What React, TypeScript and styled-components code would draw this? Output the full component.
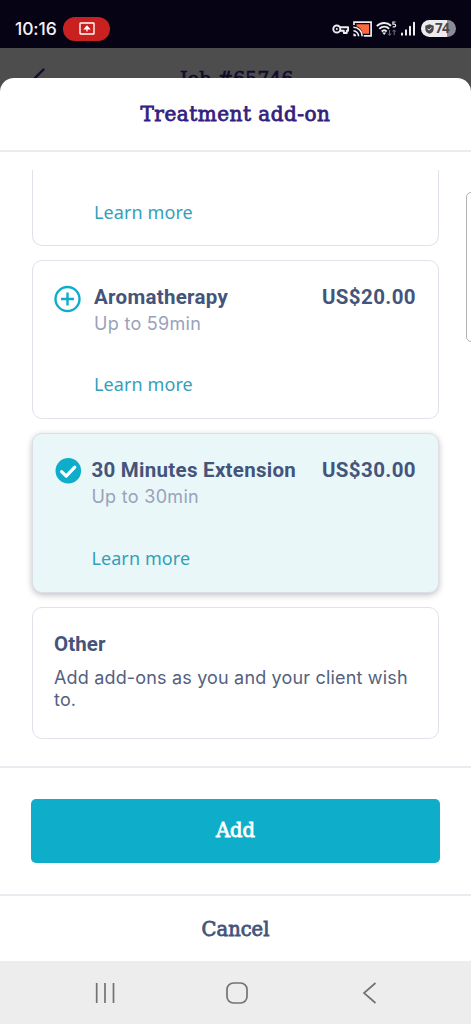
import React from "react";
import styled, { createGlobalStyle } from "styled-components";

const slab = `"DejaVu Serif", serif`;
const sans = `Roboto, "Liberation Sans", sans-serif`;
const body = `Inter, Roboto, sans-serif`;
const ink = "#44547a";

const GlobalStyle = createGlobalStyle`
  * { box-sizing: border-box; }
  body { margin: 0; background: #fff; }
  button { border: 0; padding: 0; background: none; font: inherit; }
`;

const Screen = styled.div`
  width: 471px;
  height: 1024px;
  display: flex;
  flex-direction: column;
  overflow: hidden;
  position: relative;
  background: #4d4d4d;
  font-family: ${sans};
`;

const StatusBar = styled.header`
  height: 48px;
  flex: none;
  display: flex;
  align-items: center;
  padding: 9px 15px 0 15px;
  background: #060314;
  color: #f3f3f5;
`;

const Clock = styled.span`
  width: 48px;
  font: 500 17.5px/20px Inter, sans-serif;
  letter-spacing: -0.1px;
  white-space: nowrap;
`;

const CastPill = styled.span`
  width: 47px;
  height: 24px;
  border-radius: 12px;
  background: #c8211f;
  display: flex;
  align-items: center;
  justify-content: center;
`;

const StatusIcons = styled.div`
  display: flex;
  align-items: center;
  margin-left: auto;
`;

const Battery = styled.span`
  width: 35px;
  height: 17px;
  margin-left: 5px;
  border-radius: 9px;
  display: flex;
  align-items: center;
  padding-left: 4px;
  gap: 1px;
  background: linear-gradient(90deg, #ececee 0 26px, #8d8c94 26px);
  color: #49484f;
  font: 700 13.5px/17px "Open Sans", sans-serif;
  letter-spacing: -0.8px;
`;

const DimmedHeader = styled.div`
  height: 30px;
  flex: none;
  display: flex;
  padding: 17px 0 0 30px;
  color: #120a30;
`;

const BackIcon = styled.svg`
  flex: none;
`;

const JobTitle = styled.span`
  margin: 1px 0 0 135px;
  font: 400 18.5px/26px ${slab};
  -webkit-text-stroke: 0.7px currentColor;
  letter-spacing: 0.3px;
  white-space: nowrap;
`;

const Sheet = styled.section`
  height: 883px;
  flex: none;
  border-radius: 14px 14px 0 0;
  background: #fff;
  display: flex;
  flex-direction: column;
  position: relative;
`;

const SheetTitle = styled.h1`
  margin: 0;
  height: 74px;
  flex: none;
  border-bottom: 2px solid #eaeaf0;
  text-align: center;
  color: #34207e;
  font: 400 20px/73px ${slab};
  letter-spacing: 0.5px;
  -webkit-text-stroke: 0.8px currentColor;
`;

const ScrollArea = styled.div`
  height: 596px;
  margin-top: 18px;
  flex: none;
  padding: 0 32px;
  overflow: hidden;
  display: flex;
  flex-direction: column;
  gap: 14px;
`;

const Card = styled.article<{ $height: number; $selected?: boolean; $cut?: boolean }>`
  width: 406.5px;
  height: ${(p) => p.$height}px;
  flex: none;
  border: 1.5px solid #e1e1ea;
  border-radius: 10px;
  padding: ${(p) => (p.$cut ? "0" : "22px")} 21.5px 0 21px;
  display: flex;
  gap: ${(p) => (p.$selected ? 9.4 : 12)}px;
  ${(p) => p.$cut && "border-top: 0; border-radius: 0 0 10px 10px;"}
  ${(p) =>
    p.$selected &&
    "background: #e9f7f9; border-color: #dadfe8; box-shadow: 0 2px 6px rgba(0,0,0,.25);"}
`;

const Mark = styled.span`
  width: 28px;
  height: 28px;
  margin-top: 1.5px;
`;

const Details = styled.div`
  flex: 1;
  display: flex;
  flex-direction: column;
`;

const Row = styled.div`
  display: flex;
  justify-content: space-between;
`;

const Name = styled.h2<{ $spacing?: number }>`
  margin: 0;
  color: ${ink};
  font: 700 20.5px/28px ${sans};
  letter-spacing: ${(p) => p.$spacing ?? 0.28}px;
  white-space: nowrap;
`;

const Duration = styled.p`
  margin: 0 0 -1px;
  color: #99a2b9;
  font: 400 18px/26px ${body};
  letter-spacing: 0.3px;
`;

const LearnMore = styled.a<{ $top: number }>`
  margin-top: ${(p) => p.$top}px;
  color: #349fba;
  font: 400 18px/26px "Noto Sans", sans-serif;
  letter-spacing: 0.1px;
`;

const Note = styled.p`
  margin: 9px -8px 0 0;
  color: #53617f;
  font: 400 18px/22px ${body};
  letter-spacing: 0.17px;
`;

const AddArea = styled.div`
  height: 130px;
  flex: none;
  border: solid #eaeaf0;
  border-width: 2px 0;
  padding: 31px 31px 0;
`;

const AddButton = styled.button`
  display: block;
  width: 409px;
  height: 63.5px;
  border-radius: 5px;
  background: #0eaecb;
  color: #fff;
  font: 400 19.5px/62px ${slab};
  padding-top: 0.5px;
  -webkit-text-stroke: 0.8px currentColor;
`;

const CancelButton = styled.button`
  height: 65px;
  color: ${ink};
  font: 400 19.5px/63px ${slab};
  padding-top: 2px;
  -webkit-text-stroke: 0.8px currentColor;
`;

const NavBar = styled.nav`
  height: 63px;
  flex: none;
  background: #ededed;
  display: flex;
  align-items: center;
  padding-left: 94px;
`;

const EdgeHandle = styled.div`
  position: absolute;
  top: 191.5px;
  right: -10px;
  width: 15.5px;
  height: 150px;
  border: 1.5px solid #b4b4b8;
  border-radius: 5px;
`;

const PlusMark = () => (
  <Mark>
    <svg width="28" height="28" viewBox="0 0 28 28" fill="none" stroke="#0eaecb" strokeWidth="2.4">
      <circle cx="13.5" cy="14" r="12" />
      <path d="M13.5 7.5v13M7 14h13" />
    </svg>
  </Mark>
);

const CheckMark = () => (
  <Mark>
    <svg width="28" height="28" viewBox="0 0 28 28" fill="none">
      <circle cx="14.3" cy="12.8" r="12.8" fill="#0eaecb" />
      <path d="M7.6 13.6l4.6 4.5 8.6-9" stroke="#fff" strokeWidth="3.2" strokeLinecap="round" strokeLinejoin="round" />
    </svg>
  </Mark>
);

const Signals = () => (
  <svg width="84" height="20" viewBox="0 0 84 20" fill="none" stroke="#ededf0">
    <g strokeWidth="1.9">
      <circle cx="4.8" cy="10" r="3.5" />
      <path d="M8 8.3h8.1v3.4h-1.3v2.3h-3v-2.3H8" strokeLinejoin="round" />
    </g>
    <circle cx="4.8" cy="10" r="1" fill="#ededf0" stroke="none" />
    <path d="M24.5 5.3H37v9.5h-6.3c-.6-4-3-6.6-6.2-7.5z" fill="#ff693d" stroke="none" />
    <path d="M22 6V3.2h17.1v13.6h-7.3" strokeWidth="1.7" />
    <g strokeWidth="1.6">
      <path d="M21.4 8.2a8.8 8.8 0 0 1 8.8 9M21.4 11.8a5.4 5.4 0 0 1 5.2 5.4" />
    </g>
    <path d="M21.4 14.5v2.7h2.8a2.8 2.8 0 0 0-2.8-2.7z" fill="#ededf0" stroke="none" />
    <g strokeWidth="1.9">
      <path d="M44.8 7.1c4-4 10.2-4.1 14.2-.4M47.3 9.9c3-2.8 7-2.8 9.8-.1M49.7 12.5c1.5-1.5 3.5-1.5 5 0" />
    </g>
    <path d="M50.2 13.6h4L52.2 16z" fill="#ededf0" stroke="none" />
    <path d="M57.6 11v5.2M56 14.6l1.6 1.7 1.5-1.7M62.2 16.2V11M60.7 12.6l1.5-1.7 1.5 1.7" stroke="#77757f" strokeWidth="1" />
    <path d="M63.5 3h-2.6v2.2h1.4c1.8 0 1.8 2.7 0 2.7h-1.6" strokeWidth="1.2" />
    <g strokeWidth="2" strokeLinecap="round">
      <path d="M70 14.5v1.3M74 11.3v4.5M78 7.8v8M82 3.8v12" />
    </g>
  </svg>
);

export default function App() {
  return (
    <Screen>
      <GlobalStyle />
      <StatusBar>
        <Clock>10:16</Clock>
        <CastPill>
          <svg width="16" height="13" viewBox="0 0 16 13" fill="none" stroke="#fff">
            <rect x="1" y="1" width="14" height="11" rx=".6" strokeWidth="1.4" />
            <path d="M8 9.6V5M5.6 6.8L8 4.2l2.4 2.6z" strokeWidth="1.2" fill="#fff" />
          </svg>
        </CastPill>
        <StatusIcons>
          <Signals />
          <Battery>
            <svg width="9" height="10" viewBox="0 0 9 10">
              <path d="M4.5.2L8.7 1.7v3.2c0 2.3-1.6 3.9-4.2 4.9C1.9 8.8.3 7.2.3 4.9V1.7z" fill="#49484f" />
              <path d="M2.5 4.7l1.5 1.5 2.6-2.7" fill="none" stroke="#ececee" />
            </svg>
            74
          </Battery>
        </StatusIcons>
      </StatusBar>
      <DimmedHeader>
        <BackIcon width="15" height="26" viewBox="0 0 15 26" fill="none" stroke="#120a30" strokeWidth="2.4" strokeLinecap="round">
          <path d="M13.5 4.5L3 15l10.5 10.5" />
        </BackIcon>
        <JobTitle>Job #65746</JobTitle>
      </DimmedHeader>
      <Sheet>
        <SheetTitle>Treatment add-on</SheetTitle>
        <ScrollArea>
          <Card $height={76.4} $cut>
            <Mark />
            <Details>
              <LearnMore $top={29}>Learn more</LearnMore>
            </Details>
          </Card>
          <Card $height={159}>
            <PlusMark />
            <Details>
              <Row>
                <Name>Aromatherapy</Name>
                <Name $spacing={0.4}>US$20.00</Name>
              </Row>
              <Duration>Up to 59min</Duration>
              <LearnMore $top={35}>Learn more</LearnMore>
            </Details>
          </Card>
          <Card $height={159.8} $selected>
            <CheckMark />
            <Details>
              <Row>
                <Name>30 Minutes Extension</Name>
                <Name $spacing={0.4}>US$30.00</Name>
              </Row>
              <Duration>Up to 30min</Duration>
              <LearnMore $top={36}>Learn more</LearnMore>
            </Details>
          </Card>
          <Card $height={131.5}>
            <Details>
              <Name $spacing={0.1}>Other</Name>
              <Note>Add add-ons as you and your client wish to.</Note>
            </Details>
          </Card>
        </ScrollArea>
        <AddArea>
          <AddButton>Add</AddButton>
        </AddArea>
        <CancelButton>Cancel</CancelButton>
      </Sheet>
      <NavBar>
        <svg width="290" height="24" viewBox="0 0 290 24" fill="none" stroke="#737373" strokeWidth="1.7">
          <path d="M2.7 2v20M11 2v20M19.5 2v20" />
          <rect x="133" y="2" width="20" height="20" rx="6.5" />
          <path d="M281.5 2L270 12l11.5 10" />
        </svg>
      </NavBar>
      <EdgeHandle />
    </Screen>
  );
}
